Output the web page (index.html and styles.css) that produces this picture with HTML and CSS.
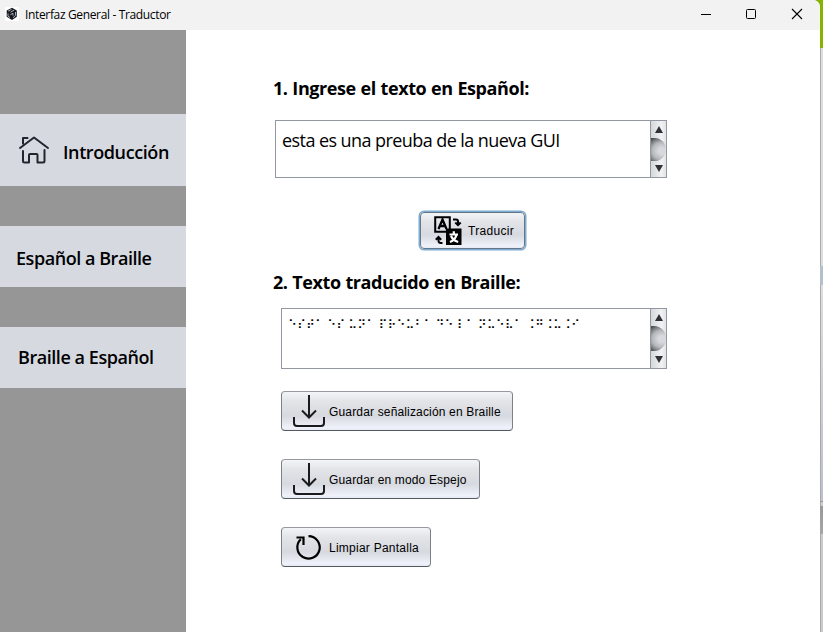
FILE: index.html
```html
<!DOCTYPE html>
<html lang="es">
<head>
<meta charset="utf-8">
<title>Interfaz General - Traductor</title>
<link rel="stylesheet" href="styles.css">
</head>
<body>
<div class="desktop">
<div class="window">
  <header class="titlebar">
    <svg class="app-icon" width="14" height="14" viewBox="0 0 14 14"><rect width="14" height="14" fill="#fff"/><path d="M7 .8 11.8 3.5V9.8L7 13 1.7 9.8V3.6z" fill="#16191f"/><path d="M3 4.2 6.5 2.4M5.5 5.2 9 3.2M3 6.5v2.7l2 1.3M5.3 7.8 8 6.2v2.4M10.5 5v3.4L8 10.8" fill="none" stroke="#b9bdc6" stroke-width=".9"/></svg>
    <span class="title">Interfaz General - Traductor</span>
    <svg class="controls" width="104" height="14" viewBox="0 0 104 14" fill="none" stroke="#000"><path d="M1 7.5h10"/><rect x="46.5" y="2.5" width="9" height="9" rx="1"/><path d="m92 2 10 10M102 2 92 12" stroke-width="1.1"/></svg>
  </header>
  <div class="body">
    <nav class="sidebar">
      <a class="nav-item home">
        <svg width="32" height="30" viewBox="0 0 32 30" fill="none" stroke="#20262d" stroke-width="2" stroke-linecap="round" stroke-linejoin="round"><path d="M2 13 16 2.500 30 13M5 8.500V3h4.500M5 16v10q0 1.500 1.500 1.500h4.500V20q0-1 1-1h6.500q1 0 1 1v7.500H25q1.500 0 1.500-1.500V15"/></svg>
        <span class="t-home">Introducción</span>
      </a>
      <a class="nav-item es"><span class="t-es">Español a Braille</span></a>
      <a class="nav-item br"><span class="t-br">Braille a Español</span></a>
    </nav>
    <main class="content">
      <h1 class="heading"><span class="h-one">1. Ingrese el texto en Español:</span></h1>
      <div class="field input">
        <div class="text"><span class="plain">esta es una preuba de la nueva GUI</span></div>
        <div class="scroll"><i class="up"></i><i class="thumb"></i><i class="down"></i></div>
      </div>
      <button class="btn translate">
        <svg width="28" height="30" viewBox="0 0 28 30"><path d="M1.200 1.200h14.600v14.600H1.200z" fill="none" stroke="#000" stroke-width="2"/><path d="m4.500 13 4-9.500 4 9.500M6 10h5" fill="none" stroke="#000" stroke-width="2.300"/><path d="M12 12.500h15.500V29H12z" fill="#000"/><path d="M15.500 18.500h8.500M19.800 15.200v3M17 20q2 4.500 7.200 6M22.500 19q-1.500 5-6.500 7" fill="none" stroke="#fff" stroke-width="2.200"/><path d="M19 3.500h3q2 0 2 2V9m-2.700-2.500L24 9.200l2.700-2.700M8.500 27H7q-2.500 0-2.500-2.500V21m-2.700 2.700 2.700-2.700 2.700 2.700" fill="none" stroke="#000" stroke-width="2"/></svg>
        <span class="b-tr">Traducir</span>
      </button>
      <h1 class="heading second"><span class="h-two">2. Texto traducido en Braille:</span></h1>
      <div class="field output">
        <div class="text"><span class="braille">⠑⠎⠞⠁ ⠑⠎ ⠥⠝⠁ ⠏⠗⠑⠥⠃⠁ ⠙⠑ ⠇⠁ ⠝⠥⠑⠧⠁ ⠨⠛⠨⠥⠨⠊</span></div>
        <div class="scroll"><i class="up"></i><i class="thumb"></i><i class="down"></i></div>
      </div>
      <button class="btn save">
        <svg width="32" height="33" viewBox="0 0 32 33" fill="none" stroke="#1b1b1f" stroke-width="2"><path d="M16 0v22M9 15.500l7 7 7-7"/><path d="M1 22v6q0 3 3 3h24q3 0 3-3v-6"/></svg>
        <span class="b-sv">Guardar señalización en Braille</span>
      </button>
      <button class="btn mirror">
        <svg width="32" height="33" viewBox="0 0 32 33" fill="none" stroke="#1b1b1f" stroke-width="2"><path d="M16 0v22M9 15.500l7 7 7-7"/><path d="M1 22v6q0 3 3 3h24q3 0 3-3v-6"/></svg>
        <span class="b-mi">Guardar en modo Espejo</span>
      </button>
      <button class="btn clear">
        <svg width="32" height="33" viewBox="0 0 32 33" fill="none" stroke="#000" stroke-width="2.200"><path d="M15.500 5.200A11.200 11.200 0 1 1 7.800 8.300M3.500 6.500h7v7.500"/></svg>
        <span class="b-cl">Limpiar Pantalla</span>
      </button>
    </main>
  </div>
</div>
<aside class="edge"></aside>
</div>
</body>
</html>
```
FILE: styles.css
```css
* { box-sizing: border-box; }
body { margin: 0; overflow: hidden; background: #86b300; font-family: "Open Sans", "Noto Sans", sans-serif; color: #000; }
span { white-space: nowrap; }
svg { flex: none; display: block; }
.desktop { display: flex; height: 632px; width: 823px; }
.window { width: 820px; background: #fff; border-top-right-radius: 7px; overflow: hidden; }
.edge { width: 3px; background:
  linear-gradient(#86b300, #86b300) 0 0 / 3px 48px no-repeat,
  linear-gradient(#b4bfca, #b4bfca) 0 266px / 3px 19px no-repeat,
  linear-gradient(#999, #999) 0 501px / 3px 1px no-repeat,
  linear-gradient(#999, #a6a6a6) 0 506px / 3px 28px no-repeat,
  linear-gradient(90deg, #ababab 1px, transparent 1px),
  linear-gradient(#dedede 0 285px, #bcc0cf 500px, #cbcbcb 502px); }
.titlebar { height: 30px; background: #f2f2f2; display: flex; align-items: center; padding: 0 16px 2px 5px; }
.title { font-size: 12px; letter-spacing: -.35px; margin-left: 6px; padding-top: 1px; }
.controls { margin-left: auto; }
.body { display: flex; height: 602px; }
.sidebar { width: 186px; background: #969696; padding-top: 84px; display: flex; flex-direction: column; gap: 40px; }
.nav-item { background: #d6d9e0; height: 61px; display: flex; align-items: center; font-size: 18px; font-weight: 600; letter-spacing: -.45px; padding-top: 2px; }
.nav-item.home { height: 72px; padding: 0 0 0 18px; }
.home span { margin: 4px 0 0 13px; letter-spacing: -.4px; }
.es { padding-left: 16px; }
.br { padding-left: 18px; padding-top: 0; }
.br span { margin-top: -1px; }
.content { flex: 1; padding: 45px 0 0 87px; display: flex; flex-direction: column; align-items: flex-start; }
.heading { margin: 0; height: 26px; line-height: 26px; font-size: 18px; font-weight: 700; letter-spacing: -.42px; word-spacing: .5px; }
.field { display: flex; border: 1px solid #9297a1; background: #fff; }
.input { margin: 19px 0 0 2px; width: 392px; height: 58px; }
.output { margin: 13px 0 0 8px; width: 386px; height: 61px; }
.text { flex: 1; padding: 6px 0 0 6px; font-size: 18px; line-height: 26px; }
.output .text { padding: 4px 0 0 6px; line-height: 18px; }
.plain { letter-spacing: -.57px; }
.braille { font-family: "DejaVu Sans", sans-serif; font-size: 12.3px; word-spacing: -.8px; }
.scroll { width: 16px; border-left: 1px solid #9297a1; background: linear-gradient(90deg, #d5d8dc, #f1f2f3 70%, #e2e3e6); display: flex; flex-direction: column; align-items: center; justify-content: space-between; padding: 5px 0; }
.up, .down { border: 4px solid transparent; border-top: 0; border-bottom: 7px solid #303134; }
.down { border-bottom: 0; border-top: 7px solid #303134; }
.thumb { width: 15px; height: 23px; border-radius: 0 12px 12px 0; background: radial-gradient(ellipse 18px 16px at 11px 13px, #d8d9de 20%, #b5b6ba 55%, #3d3e42 100%); }
.output .thumb { height: 25px; }
.btn { height: 40px; border: 1px solid #85898f; border-color: #969aa0 #7b7f86 #555961; border-radius: 4px; background: linear-gradient(#f3f4f6, #e3e4e8 25%, #d6d9df 63%, #eff2fa 94%, #e5e9f2); padding: 0 0 0 11px; margin: 28px 0 0 8px; display: flex; align-items: center; font: 12px "Liberation Sans", sans-serif; color: #000; letter-spacing: .16px; }
.btn span { margin-left: 4px; padding-top: 1px; }
.clear span { letter-spacing: .25px; }
.translate { width: 105px; height: 37px; margin: 34px 0 0 147px; padding-left: 13px; border-color: #64788a; box-shadow: 0 0 0 1.5px #7fabd1; }
.translate span { margin-left: 6px; padding-top: 0; letter-spacing: .3px; }
.second { margin-top: 20px; }
.save { width: 232px; margin-top: 22px; }
.mirror { width: 199px; }
.clear { width: 150px; }
```
